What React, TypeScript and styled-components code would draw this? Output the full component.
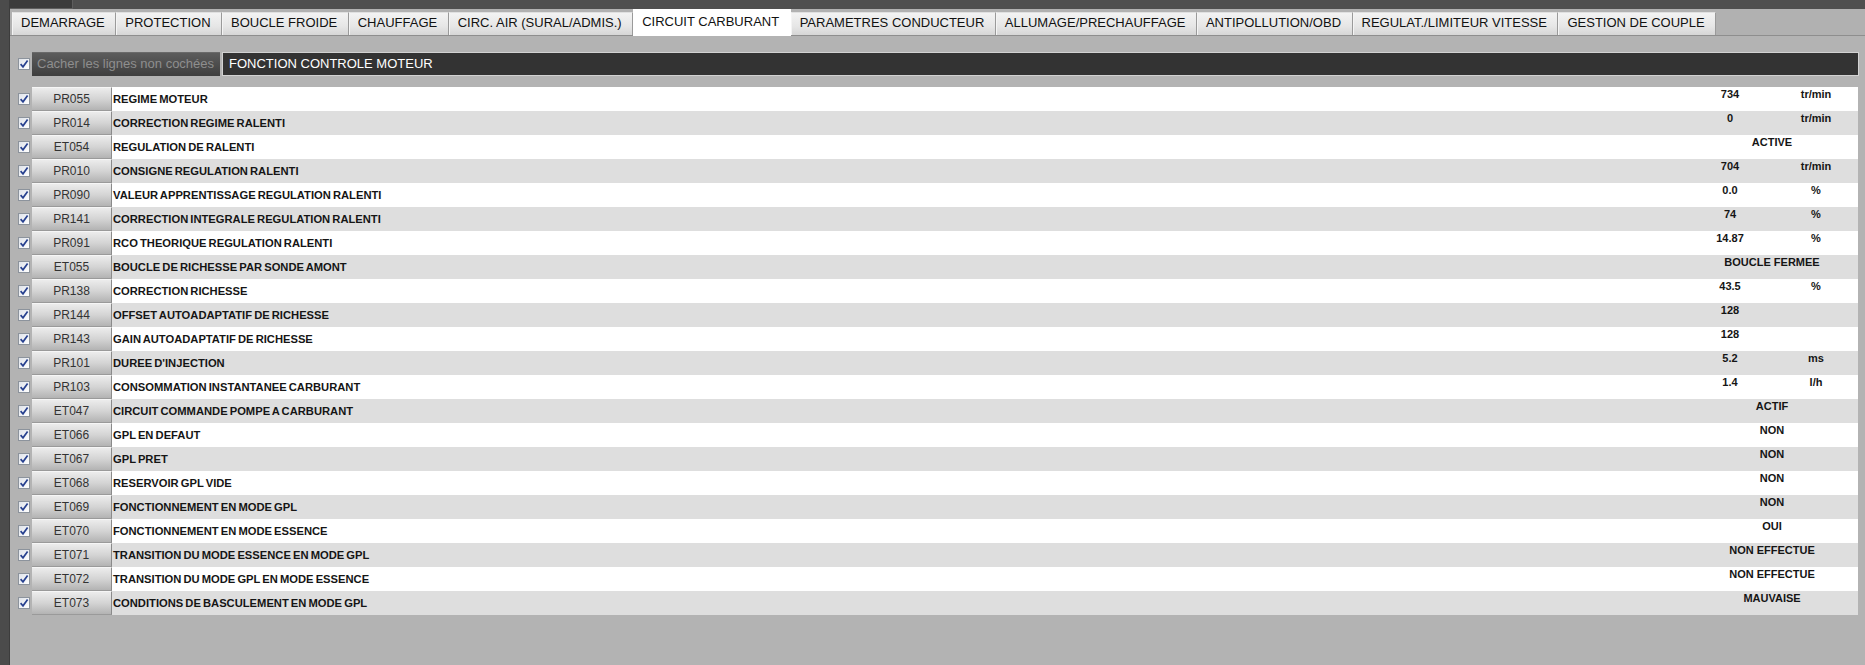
import React from "react";
import styled, { createGlobalStyle } from "styled-components";

const GlobalStyle = createGlobalStyle`
  html, body, #root { height: 100%; }
  body {
    margin: 0;
    background: #b3b3b3;
    font-family: "Liberation Sans", Arial, sans-serif;
    overflow: hidden;
  }
`;

const Shell = styled.div`
  display: flex;
  height: 665px;
  width: 1865px;
  background: #b3b3b3;
`;

const LeftRail = styled.div`
  width: 9px;
  flex: 0 0 9px;
  background: #4b4b4b;
  border-right: 1px solid #3c3c3c;
`;

const Main = styled.div`
  flex: 1;
  display: flex;
  flex-direction: column;
  min-width: 0;
`;

const TopStrip = styled.div`
  height: 9px;
  background: #4f4f4f;
  display: flex;
`;

const TopBlock = styled.div`
  width: 62px;
  height: 8px;
  background: #3b3b3b;
  border-right: 1px solid #5e5e5e;
  border-bottom: 1px solid #5e5e5e;
`;

const TabBar = styled.div`
  height: 26px;
  display: flex;
  align-items: flex-end;
  padding-left: 2px;
  border-bottom: 1px solid #8e8e8e;
  background: #b1b1b1;
`;

const Tab = styled.div<{ $active?: boolean }>`
  box-sizing: border-box;
  height: ${(p) => (p.$active ? "27px" : "23px")};
  margin-bottom: ${(p) => (p.$active ? "-1px" : "0")};
  padding: ${(p) => (p.$active ? "4px 10.5px 0 8px" : "2px 10.5px 0 8px")};
  font-size: 13px;
  line-height: 15px;
  color: #111;
  white-space: nowrap;
  border-left: 1px solid ${(p) => (p.$active ? "#ffffff" : "#f4f4f4")};
  border-right: 1px solid ${(p) => (p.$active ? "#ffffff" : "#9a9a9a")};
  border-top: 1px solid ${(p) => (p.$active ? "#ffffff" : "#e0e0e0")};
  background: ${(p) =>
    p.$active ? "#ffffff" : "linear-gradient(#f3f3f3, #e6e6e6 60%, #d6d6d6)"};
`;

const FilterBar = styled.div`
  margin-top: 16px;
  height: 24px;
  display: flex;
  align-items: stretch;
  margin-right: 6px;
`;

const CheckCell = styled.div`
  width: 22px;
  flex: 0 0 22px;
  display: flex;
  align-items: center;
  padding-left: 8px;
  box-sizing: border-box;
`;

const Box = styled.span`
  width: 12px;
  height: 12px;
  box-sizing: border-box;
  border: 1px solid #8c939c;
  background: linear-gradient(135deg, #dfe3ea, #ffffff);
  display: inline-flex;
  align-items: center;
  justify-content: center;
`;

const HideButton = styled.div`
  width: 188px;
  flex: 0 0 188px;
  box-sizing: border-box;
  background: linear-gradient(#5c5c5c, #3e3e3e);
  border-top: 1px solid #6a6a6a;
  color: #8e8e8e;
  font-size: 13px;
  line-height: 22px;
  padding-left: 5px;
  white-space: nowrap;
`;

const FunctionField = styled.div`
  flex: 1;
  box-sizing: border-box;
  margin-left: 2px;
  background: #333333;
  border: 1px solid #d2d2d2;
  color: #ffffff;
  font-size: 13px;
  line-height: 22px;
  padding-left: 6px;
`;

const Table = styled.div`
  margin-top: 11px;
  margin-right: 7px;
  display: flex;
  flex-direction: column;
`;

const Row = styled.div`
  display: flex;
  height: 24px;
`;

const CodeButton = styled.div`
  width: 80px;
  flex: 0 0 80px;
  box-sizing: border-box;
  background: linear-gradient(#ececec, #d4d4d4 50%, #b3b3b3);
  border-top: 1px solid #f6f6f6;
  border-right: 1px solid #8a8a8a;
  border-bottom: 1px solid #9a9a9a;
  color: #333;
  font-size: 12px;
  line-height: 22px;
  text-align: center;
`;

const RowBody = styled.div<{ $alt: boolean }>`
  flex: 1;
  display: grid;
  grid-template-columns: 1fr 88px 84px;
  background: ${(p) => (p.$alt ? "#dedede" : "#ffffff")};
  color: #151515;
  font-size: 11px;
  font-weight: bold;
`;

const Label = styled.div`
  align-self: center;
  padding-left: 1px;
  line-height: 13px;
  white-space: nowrap;
  font-size: 11.2px;
  word-spacing: -1px;
`;

const Value = styled.div<{ $span?: boolean }>`
  grid-column: ${(p) => (p.$span ? "2 / span 2" : "auto")};
  text-align: center;
  padding-top: 1px;
  line-height: 13px;
  white-space: nowrap;
`;

const CheckMark = () => (
  <svg width="10" height="10" viewBox="0 0 10 10">
    <path d="M1.6 5.2 L4 7.8 L8.6 1.6" fill="none" stroke="#27408f" strokeWidth="1.7" />
  </svg>
);

const Check = () => (
  <Box>
    <CheckMark />
  </Box>
);

const tabs = [
  "DEMARRAGE",
  "PROTECTION",
  "BOUCLE FROIDE",
  "CHAUFFAGE",
  "CIRC. AIR (SURAL/ADMIS.)",
  "CIRCUIT CARBURANT",
  "PARAMETRES CONDUCTEUR",
  "ALLUMAGE/PRECHAUFFAGE",
  "ANTIPOLLUTION/OBD",
  "REGULAT./LIMITEUR VITESSE",
  "GESTION DE COUPLE",
];

type Item = { code: string; label: string; value: string; unit?: string; enumVal?: boolean };

const rows: Item[] = [
  { code: "PR055", label: "REGIME MOTEUR", value: "734", unit: "tr/min" },
  { code: "PR014", label: "CORRECTION REGIME RALENTI", value: "0", unit: "tr/min" },
  { code: "ET054", label: "REGULATION DE RALENTI", value: "ACTIVE", enumVal: true },
  { code: "PR010", label: "CONSIGNE REGULATION RALENTI", value: "704", unit: "tr/min" },
  { code: "PR090", label: "VALEUR APPRENTISSAGE REGULATION RALENTI", value: "0.0", unit: "%" },
  { code: "PR141", label: "CORRECTION INTEGRALE REGULATION RALENTI", value: "74", unit: "%" },
  { code: "PR091", label: "RCO THEORIQUE REGULATION RALENTI", value: "14.87", unit: "%" },
  { code: "ET055", label: "BOUCLE DE RICHESSE PAR SONDE AMONT", value: "BOUCLE FERMEE", enumVal: true },
  { code: "PR138", label: "CORRECTION RICHESSE", value: "43.5", unit: "%" },
  { code: "PR144", label: "OFFSET AUTOADAPTATIF DE RICHESSE", value: "128", unit: "" },
  { code: "PR143", label: "GAIN AUTOADAPTATIF DE RICHESSE", value: "128", unit: "" },
  { code: "PR101", label: "DUREE D'INJECTION", value: "5.2", unit: "ms" },
  { code: "PR103", label: "CONSOMMATION INSTANTANEE CARBURANT", value: "1.4", unit: "l/h" },
  { code: "ET047", label: "CIRCUIT COMMANDE POMPE A CARBURANT", value: "ACTIF", enumVal: true },
  { code: "ET066", label: "GPL EN DEFAUT", value: "NON", enumVal: true },
  { code: "ET067", label: "GPL PRET", value: "NON", enumVal: true },
  { code: "ET068", label: "RESERVOIR GPL VIDE", value: "NON", enumVal: true },
  { code: "ET069", label: "FONCTIONNEMENT EN MODE GPL", value: "NON", enumVal: true },
  { code: "ET070", label: "FONCTIONNEMENT EN MODE ESSENCE", value: "OUI", enumVal: true },
  { code: "ET071", label: "TRANSITION DU MODE ESSENCE EN MODE GPL", value: "NON EFFECTUE", enumVal: true },
  { code: "ET072", label: "TRANSITION DU MODE GPL EN MODE ESSENCE", value: "NON EFFECTUE", enumVal: true },
  { code: "ET073", label: "CONDITIONS DE BASCULEMENT EN MODE GPL", value: "MAUVAISE", enumVal: true },
];

export default function App() {
  return (
    <>
      <GlobalStyle />
      <Shell>
        <LeftRail />
        <Main>
          <TopStrip>
            <TopBlock />
          </TopStrip>
          <TabBar>
            {tabs.map((t) => (
              <Tab key={t} $active={t === "CIRCUIT CARBURANT"}>
                {t}
              </Tab>
            ))}
          </TabBar>
          <FilterBar>
            <CheckCell>
              <Check />
            </CheckCell>
            <HideButton>Cacher les lignes non cochées</HideButton>
            <FunctionField>FONCTION CONTROLE MOTEUR</FunctionField>
          </FilterBar>
          <Table>
            {rows.map((r, i) => (
              <Row key={r.code}>
                <CheckCell>
                  <Check />
                </CheckCell>
                <CodeButton>{r.code}</CodeButton>
                <RowBody $alt={i % 2 === 1}>
                  <Label>{r.label}</Label>
                  {r.enumVal ? (
                    <Value $span>{r.value}</Value>
                  ) : (
                    <>
                      <Value>{r.value}</Value>
                      <Value>{r.unit}</Value>
                    </>
                  )}
                </RowBody>
              </Row>
            ))}
          </Table>
        </Main>
      </Shell>
    </>
  );
}
